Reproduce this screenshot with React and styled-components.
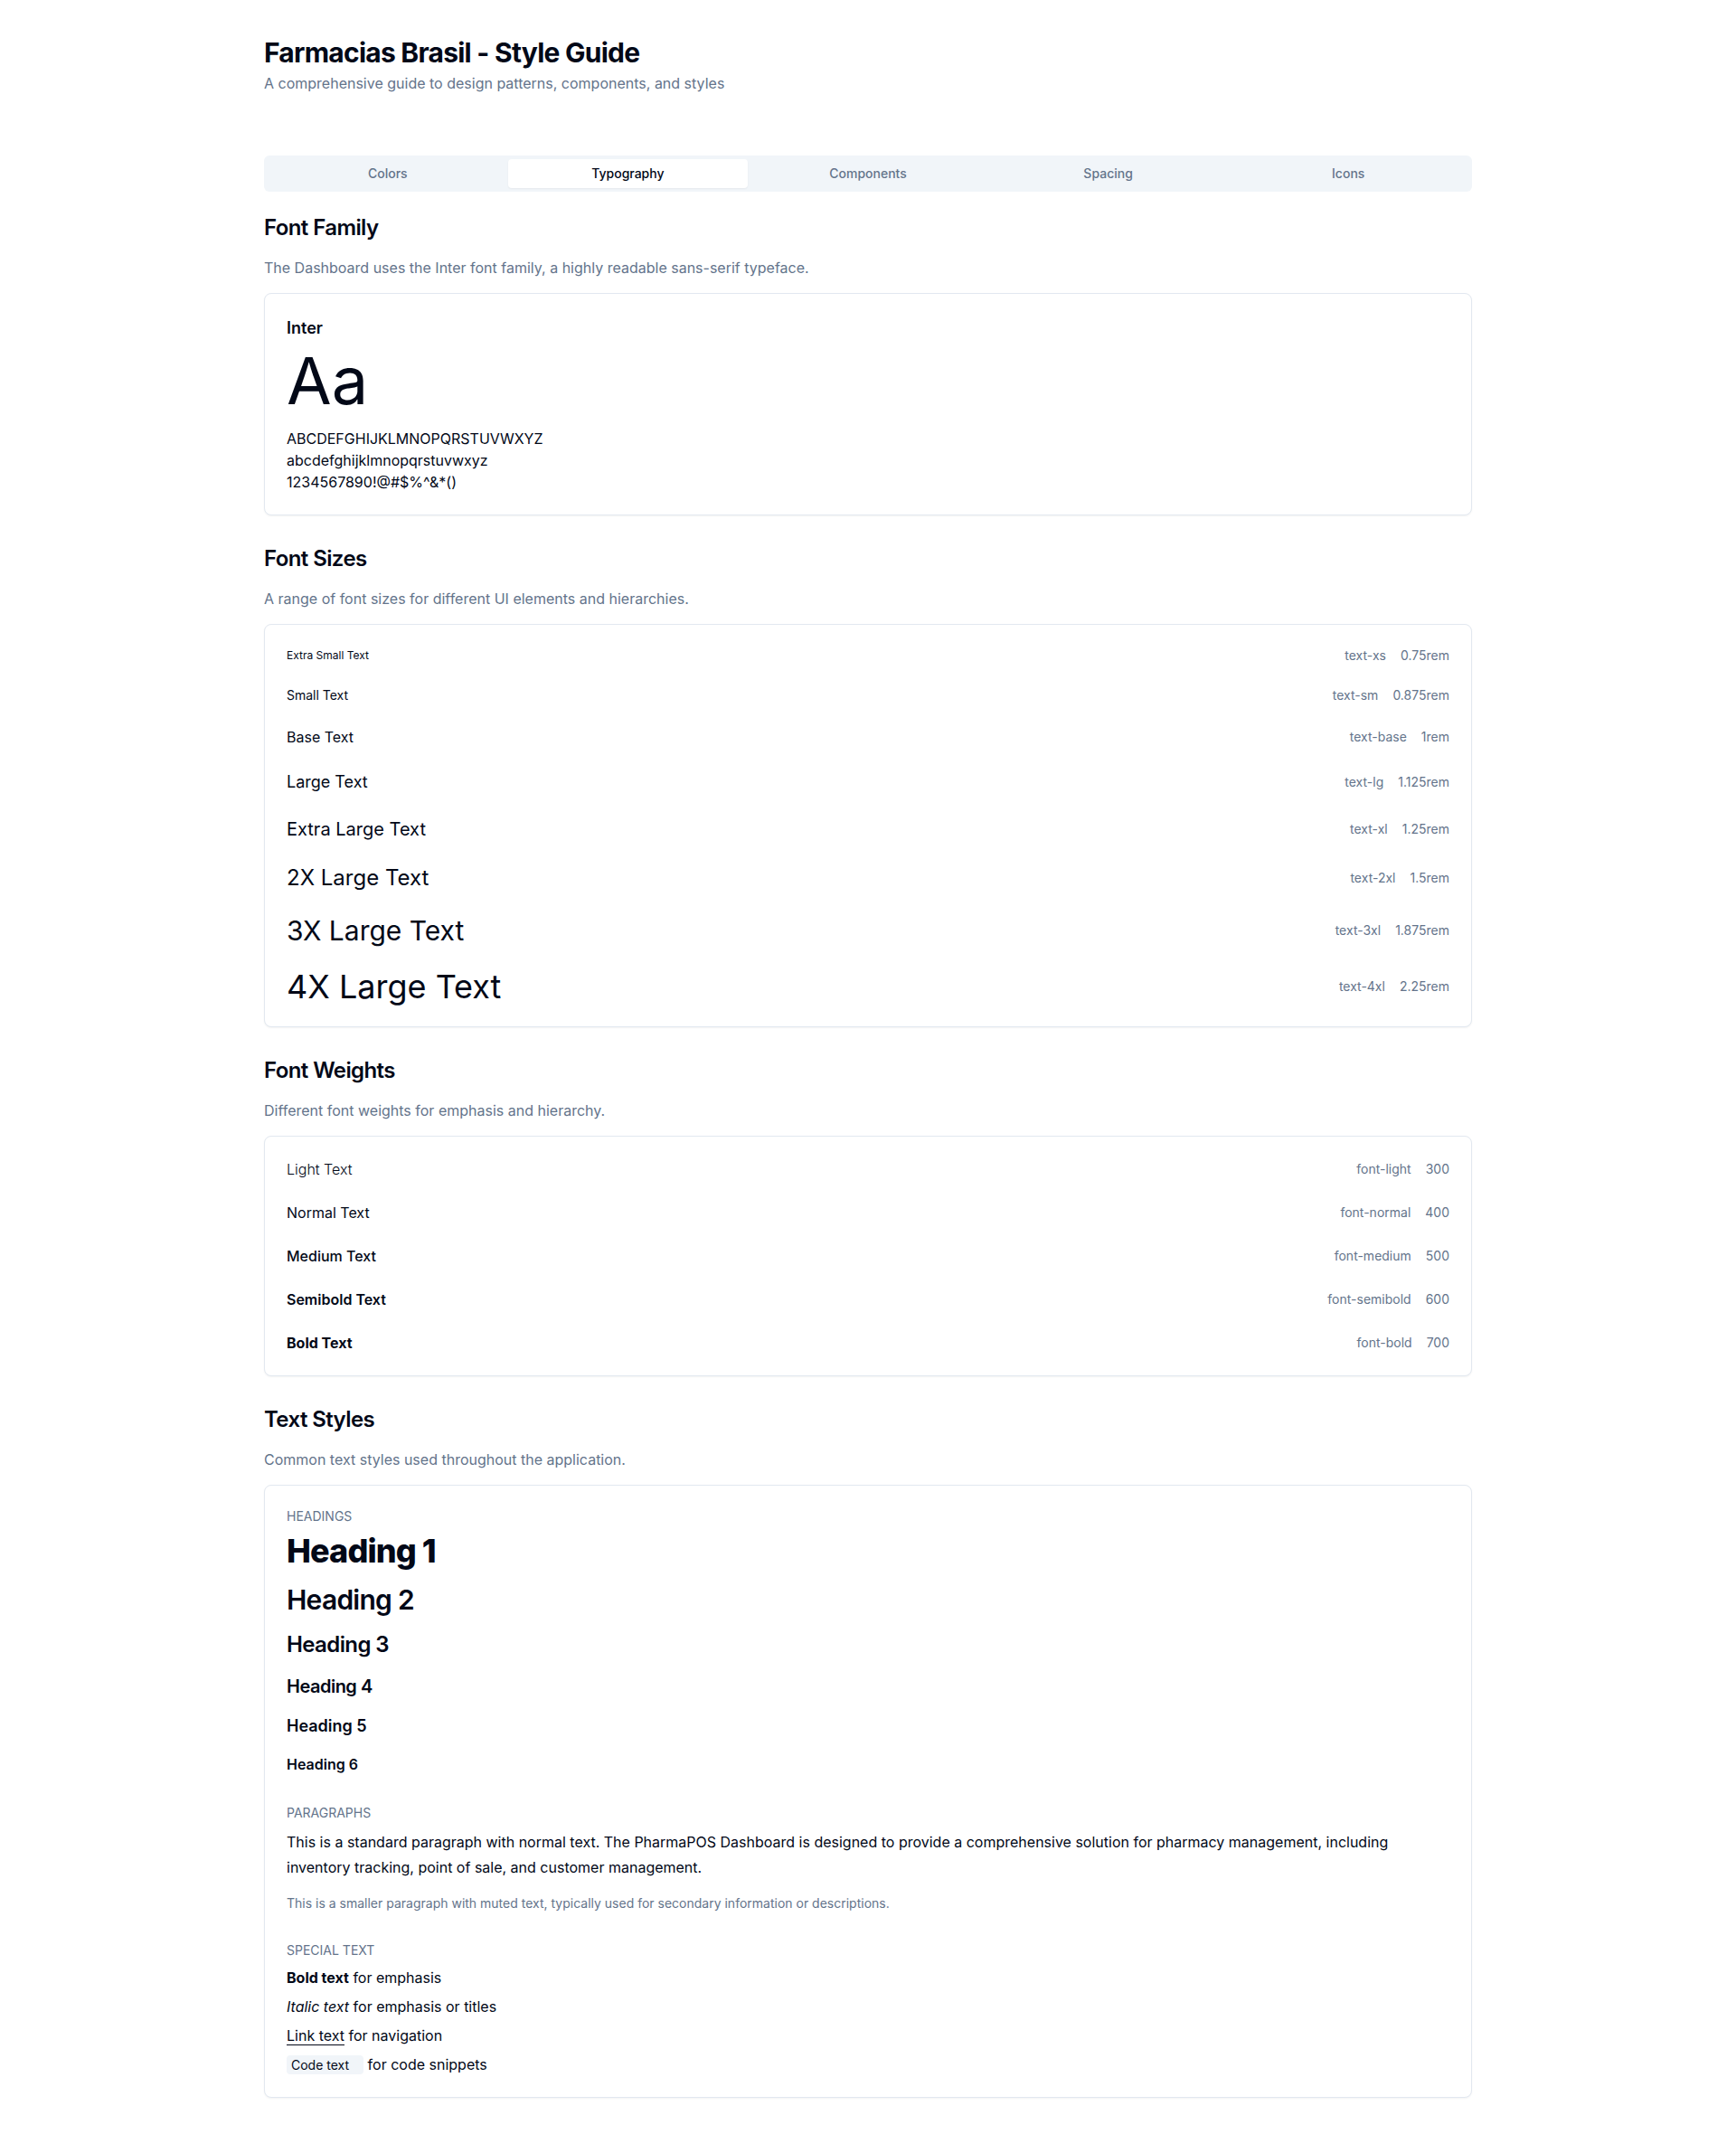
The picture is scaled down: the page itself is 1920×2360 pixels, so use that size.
import React from "react";
import styled, { createGlobalStyle, css } from "styled-components";

const GlobalStyle = createGlobalStyle`
  *, *::before, *::after { box-sizing: border-box; }
  html, body { margin: 0; padding: 0; background: #ffffff; }
  body {
    font-family: Inter, "Noto Sans", "Liberation Sans", sans-serif;
    color: #020817;
    -webkit-font-smoothing: antialiased;
  }
  p, h1, h2, h3, h4, h5, h6 { margin: 0; }
`;

const Page = styled.div`
  max-width: 1400px;
  margin: 0 auto;
  padding: 40px 32px;
`;

const Header = styled.header`
  margin-bottom: 68px;
`;

const Title = styled.h1`
  font-size: 30px;
  line-height: 36px;
  font-weight: 700;
  letter-spacing: -0.025em;
  color: #020817;
`;

const Subtitle = styled.p`
  margin-top: 4px;
  font-size: 16px;
  line-height: 24px;
  color: #64748b;
`;

const TabList = styled.div`
  display: grid;
  grid-template-columns: repeat(5, 1fr);
  height: 40px;
  padding: 4px;
  border-radius: 6px;
  background: #f1f5f9;
  color: #64748b;
`;

const TabButton = styled.button`
  border: 0;
  margin: 0;
  font-family: inherit;
  font-size: 14px;
  line-height: 20px;
  font-weight: 500;
  padding: 6px 12px;
  border-radius: 4px;
  cursor: pointer;
  background: transparent;
  color: #64748b;
  ${(p) =>
    p.$active &&
    css`
      background: #ffffff;
      color: #020817;
      box-shadow: 0 1px 2px 0 rgba(0, 0, 0, 0.05);
    `}
`;

const Content = styled.main`
  margin-top: 24px;
  display: flex;
  flex-direction: column;
  gap: 32px;
`;

const Section = styled.section`
  display: flex;
  flex-direction: column;
`;

const SectionTitle = styled.h2`
  font-size: 24px;
  line-height: 32px;
  font-weight: 600;
  letter-spacing: -0.025em;
  margin-bottom: 16px;
`;

const SectionDesc = styled.p`
  font-size: 16px;
  line-height: 24px;
  color: #64748b;
  margin-bottom: 16px;
`;

const Card = styled.div`
  border: 1px solid #e2e8f0;
  border-radius: 8px;
  background: #ffffff;
  box-shadow: 0 1px 2px 0 rgba(0, 0, 0, 0.05);
  padding: 24px;
`;

const FamilyName = styled.div`
  font-size: 18px;
  line-height: 28px;
  font-weight: 600;
  margin-bottom: 8px;
`;

const Specimen = styled.div`
  font-size: 72px;
  line-height: 72px;
  font-weight: 400;
  margin-bottom: 16px;
`;

const GlyphLine = styled.p`
  font-size: 16px;
  line-height: 24px;
`;

const RowList = styled.div`
  display: flex;
  flex-direction: column;
  gap: 24px;
`;

const Row = styled.div`
  display: flex;
  align-items: center;
  justify-content: space-between;
`;

const Sample = styled.span`
  font-size: ${(p) => p.$size}px;
  line-height: ${(p) => p.$lh}px;
  font-weight: ${(p) => p.$weight || 400};
  color: #020817;
`;

const Meta = styled.div`
  display: flex;
  align-items: center;
  gap: 16px;
  font-size: 14px;
  line-height: 20px;
  color: #64748b;
`;

const StyleGroups = styled.div`
  display: flex;
  flex-direction: column;
  gap: 32px;
`;

const Group = styled.div`
  display: flex;
  flex-direction: column;
`;

const GroupLabel = styled.div`
  font-size: 14px;
  line-height: 20px;
  color: #64748b;
  text-transform: uppercase;
  margin-bottom: 8px;
`;

const HeadingStack = styled.div`
  display: flex;
  flex-direction: column;
  gap: 16px;
`;

const headingScale = {
  1: { size: 36, lh: 40, weight: 800, track: "-0.025em" },
  2: { size: 30, lh: 36, weight: 600, track: "-0.025em" },
  3: { size: 24, lh: 32, weight: 600, track: "-0.025em" },
  4: { size: 20, lh: 28, weight: 600, track: "-0.025em" },
  5: { size: 18, lh: 28, weight: 600, track: "0" },
  6: { size: 16, lh: 24, weight: 600, track: "0" },
};

const DemoHeading = styled.div`
  font-size: ${(p) => headingScale[p.$level].size}px;
  line-height: ${(p) => headingScale[p.$level].lh}px;
  font-weight: ${(p) => headingScale[p.$level].weight};
  letter-spacing: ${(p) => headingScale[p.$level].track};
  color: #020817;
`;

const Paragraph = styled.p`
  font-size: 16px;
  line-height: 28px;
  color: #020817;
`;

const SmallParagraph = styled.p`
  margin-top: 16px;
  font-size: 14px;
  line-height: 20px;
  color: #64748b;
`;

const SpecialList = styled.div`
  display: flex;
  flex-direction: column;
  gap: 8px;
`;

const SpecialLine = styled.p`
  font-size: 16px;
  line-height: 24px;
  color: #020817;
`;

const LinkText = styled.a`
  color: #020817;
  text-decoration: underline;
  text-underline-offset: 4px;
  cursor: pointer;
`;

const Code = styled.code`
  font-family: Inter, "Noto Sans", sans-serif;
  font-size: 14px;
  line-height: 20px;
  padding: 2px 16px 2px 5px;
  border-radius: 4px;
  background: #f1f5f9;
  color: #020817;
`;

const tabs = ["Colors", "Typography", "Components", "Spacing", "Icons"];

const sizes = [
  { label: "Extra Small Text", size: 12, lh: 16, token: "text-xs", rem: "0.75rem" },
  { label: "Small Text", size: 14, lh: 20, token: "text-sm", rem: "0.875rem" },
  { label: "Base Text", size: 16, lh: 24, token: "text-base", rem: "1rem" },
  { label: "Large Text", size: 18, lh: 28, token: "text-lg", rem: "1.125rem" },
  { label: "Extra Large Text", size: 20, lh: 28, token: "text-xl", rem: "1.25rem" },
  { label: "2X Large Text", size: 24, lh: 32, token: "text-2xl", rem: "1.5rem" },
  { label: "3X Large Text", size: 30, lh: 36, token: "text-3xl", rem: "1.875rem" },
  { label: "4X Large Text", size: 36, lh: 40, token: "text-4xl", rem: "2.25rem" },
];

const weights = [
  { label: "Light Text", weight: 300, token: "font-light" },
  { label: "Normal Text", weight: 400, token: "font-normal" },
  { label: "Medium Text", weight: 500, token: "font-medium" },
  { label: "Semibold Text", weight: 600, token: "font-semibold" },
  { label: "Bold Text", weight: 700, token: "font-bold" },
];

export default function App() {
  const [active, setActive] = React.useState("Typography");
  return (
    <>
      <GlobalStyle />
      <Page>
        <Header>
          <Title>Farmacias Brasil - Style Guide</Title>
          <Subtitle>A comprehensive guide to design patterns, components, and styles</Subtitle>
        </Header>

        <TabList role="tablist">
          {tabs.map((t) => (
            <TabButton key={t} $active={t === active} onClick={() => setActive(t)}>
              {t}
            </TabButton>
          ))}
        </TabList>

        <Content>
          <Section>
            <SectionTitle>Font Family</SectionTitle>
            <SectionDesc>The Dashboard uses the Inter font family, a highly readable sans-serif typeface.</SectionDesc>
            <Card>
              <FamilyName>Inter</FamilyName>
              <Specimen>Aa</Specimen>
              <GlyphLine>ABCDEFGHIJKLMNOPQRSTUVWXYZ</GlyphLine>
              <GlyphLine>abcdefghijklmnopqrstuvwxyz</GlyphLine>
              <GlyphLine>1234567890!@#$%^&amp;*()</GlyphLine>
            </Card>
          </Section>

          <Section>
            <SectionTitle>Font Sizes</SectionTitle>
            <SectionDesc>A range of font sizes for different UI elements and hierarchies.</SectionDesc>
            <Card>
              <RowList>
                {sizes.map((s) => (
                  <Row key={s.token}>
                    <Sample $size={s.size} $lh={s.lh}>{s.label}</Sample>
                    <Meta>
                      <span>{s.token}</span>
                      <span>{s.rem}</span>
                    </Meta>
                  </Row>
                ))}
              </RowList>
            </Card>
          </Section>

          <Section>
            <SectionTitle>Font Weights</SectionTitle>
            <SectionDesc>Different font weights for emphasis and hierarchy.</SectionDesc>
            <Card>
              <RowList>
                {weights.map((w) => (
                  <Row key={w.token}>
                    <Sample $size={16} $lh={24} $weight={w.weight}>{w.label}</Sample>
                    <Meta>
                      <span>{w.token}</span>
                      <span>{w.weight}</span>
                    </Meta>
                  </Row>
                ))}
              </RowList>
            </Card>
          </Section>

          <Section>
            <SectionTitle>Text Styles</SectionTitle>
            <SectionDesc>Common text styles used throughout the application.</SectionDesc>
            <Card>
              <StyleGroups>
                <Group>
                  <GroupLabel>Headings</GroupLabel>
                  <HeadingStack>
                    {[1, 2, 3, 4, 5, 6].map((l) => (
                      <DemoHeading key={l} $level={l}>Heading {l}</DemoHeading>
                    ))}
                  </HeadingStack>
                </Group>

                <Group>
                  <GroupLabel>Paragraphs</GroupLabel>
                  <Paragraph>
                    This is a standard paragraph with normal text. The PharmaPOS Dashboard is designed to provide a
                    comprehensive solution for pharmacy management, including inventory tracking, point of sale, and
                    customer management.
                  </Paragraph>
                  <SmallParagraph>
                    This is a smaller paragraph with muted text, typically used for secondary information or descriptions.
                  </SmallParagraph>
                </Group>

                <Group>
                  <GroupLabel>Special Text</GroupLabel>
                  <SpecialList>
                    <SpecialLine>
                      <strong>Bold text</strong> for emphasis
                    </SpecialLine>
                    <SpecialLine>
                      <em>Italic text</em> for emphasis or titles
                    </SpecialLine>
                    <SpecialLine>
                      <LinkText>Link text</LinkText> for navigation
                    </SpecialLine>
                    <SpecialLine>
                      <Code>Code text</Code> for code snippets
                    </SpecialLine>
                  </SpecialList>
                </Group>
              </StyleGroups>
            </Card>
          </Section>
        </Content>
      </Page>
    </>
  );
}
